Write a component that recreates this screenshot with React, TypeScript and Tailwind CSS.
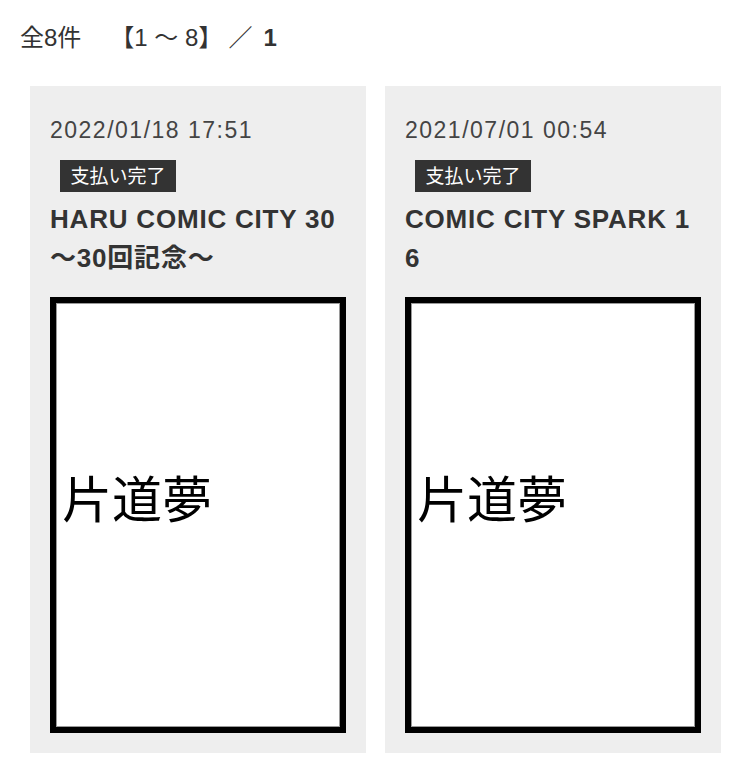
const orders = [
  { id: 1, date: '2022/01/18 17:51', status: '支払い完了', title: 'HARU COMIC CITY 30〜30回記念〜' },
  { id: 2, date: '2021/07/01 00:54', status: '支払い完了', title: 'COMIC CITY SPARK 16' },
]

function Thumb() {
  return (
    <div className="h-[436px] w-[296px] border-[6px] border-black bg-white">
      <div className="h-full w-full border border-[#9a9a9a] pl-[5px] pt-[167px]">
        <p className="text-[50px] leading-[50px] text-black" style={{ fontFamily: '"Noto Sans CJK JP", sans-serif' }}>
          片道夢
        </p>
      </div>
    </div>
  )
}

export default function App() {
  return (
    <div
      className="h-[774px] w-[750px] overflow-hidden bg-white text-[#333]"
      style={{ fontFamily: '"Liberation Sans", "Noto Sans CJK JP", sans-serif' }}
    >
      <div className="mt-[22px] flex h-[32px] items-center pl-[20px] text-[24px] leading-[32px]">
        <span>全8件</span>
        <span className="ml-[29px]">【1 ～ 8】</span>
        <span className="ml-[6px]">／</span>
        <span className="ml-[11px] font-bold">1</span>
      </div>

      <div className="ml-[30px] mt-[32px] flex gap-[19px]">
        {orders.map(o => (
          <div key={o.id} className="flex w-[336px] flex-col bg-[#eeeeee] px-[20px] pb-[20px] pt-[29px]">
            <p className="text-[23px] leading-[30px] tracking-[1.5px] text-[#444]">{o.date}</p>
            <div className="ml-[10px] mt-[15px] flex h-[32px] w-[116px] items-center justify-center bg-[#333] text-[19px] leading-none text-white">
              {o.status}
            </div>
            <h3 className="mt-[8px] h-[78px] break-all text-[26px] font-bold leading-[39px] tracking-[0.8px] text-[#333] [line-break:anywhere]">
              {o.title}
            </h3>
            <div className="mt-[19px]">
              <Thumb />
            </div>
          </div>
        ))}
      </div>
    </div>
  )
}
